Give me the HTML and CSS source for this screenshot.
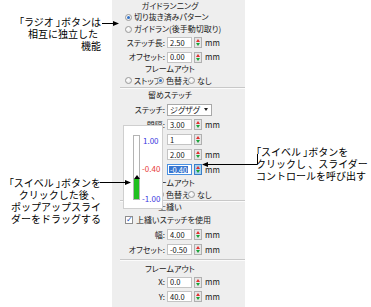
FILE: index.html
```html
<!DOCTYPE html>
<html lang="ja">
<head>
<meta charset="utf-8">
<link rel="stylesheet" href="styles.css">
</head>
<body>
<div class="stage">
  <div class="notes-left">
    <div class="note note-radio">
      <div class="ln"><span class="br">「</span>ラジオ <span class="br">」</span>ボタンは</div>
      <div class="ln ln-mid">相互に独立した</div>
      <div class="ln">機能</div>
    </div>
    <div class="note note-drag">
      <div class="ln"><span class="br">「</span>スイベル <span class="br">」</span>ボタンを</div>
      <div class="ln">クリックした後 、</div>
      <div class="ln">ポップアップスライ</div>
      <div class="ln">ダーをドラッグする</div>
    </div>
  </div>

  <div class="panel">
    <section class="grp grp-guide">
      <div class="title t-guide">ガイドランニング</div>
      <div class="opt"><span class="radio on"></span>切り抜き済みパターン</div>
      <div class="opt"><span class="radio"></span>ガイドラン(後手動切取り)</div>
      <div class="field f15"><span class="lbl">ステッチ長:</span><span class="num">2.50</span><span class="spin"><i class="up"></i><i class="dn"></i></span><span class="unit">mm</span></div>
      <div class="field f14"><span class="lbl">オフセット:</span><span class="num">0.00</span><span class="spin"><i class="up"></i><i class="dn"></i></span><span class="unit">mm</span></div>
      <div class="title t-frame">フレームアウト</div>
      <div class="opts">
        <span class="o o1"><span class="radio"></span>ストップ</span>
        <span class="o o2"><span class="radio on"></span>色替え</span>
        <span class="o o3"><span class="radio"></span>なし</span>
      </div>
    </section>
    <div class="sep"></div>
    <section class="grp grp-tie">
      <div class="title t-tie">留めステッチ</div>
      <div class="field f15"><span class="lbl">ステッチ:</span><span class="combo">ジグザグ<i class="caret"></i></span></div>
      <div class="field f15"><span class="lbl">間隔:</span><span class="num">3.00</span><span class="spin"><i class="up"></i><i class="dn"></i></span><span class="unit">mm</span></div>
      <div class="field f15"><span class="lbl"></span><span class="num">1</span><span class="spin"><i class="up"></i><i class="dn"></i></span></div>
      <div class="field f15"><span class="lbl"></span><span class="num">2.00</span><span class="spin"><i class="up"></i><i class="dn"></i></span><span class="unit">mm</span></div>
      <div class="field f15"><span class="lbl"></span><span class="num sel"><b>-0.40</b></span><span class="spin hot"><i class="up"></i><i class="dn"></i></span><span class="unit">mm</span></div>
      <div class="title t-frame2">フレームアウト</div>
      <div class="opts opts2">
        <span class="o o1"><span class="radio"></span>ストップ</span>
        <span class="o o2"><span class="radio on"></span>色替え</span>
        <span class="o o3"><span class="radio"></span>なし</span>
      </div>
    </section>
    <div class="sep"></div>
    <section class="grp grp-top">
      <div class="title t-top">上縫い</div>
      <div class="opt chk-row"><span class="check">✓</span>上縫いステッチを使用</div>
      <div class="field f15"><span class="lbl">幅:</span><span class="num">4.00</span><span class="spin"><i class="up"></i><i class="dn"></i></span><span class="unit">mm</span></div>
      <div class="field f15"><span class="lbl">オフセット:</span><span class="num">-0.50</span><span class="spin"><i class="up"></i><i class="dn"></i></span><span class="unit">mm</span></div>
    </section>
    <div class="sep"></div>
    <section class="grp grp-frame">
      <div class="title t-frame3">フレームアウト</div>
      <div class="field f14"><span class="lbl">X:</span><span class="num">0.0</span><span class="spin"><i class="up"></i><i class="dn"></i></span><span class="unit">mm</span></div>
      <div class="field f15"><span class="lbl">Y:</span><span class="num">40.0</span><span class="spin"><i class="up"></i><i class="dn"></i></span><span class="unit">mm</span></div>
    </section>
  </div>

  <div class="notes-right">
    <div class="note note-swivel">
      <div class="ln"><span class="br">「</span>スイベル <span class="br">」</span>ボタンを</div>
      <div class="ln">クリックし 、スライダー</div>
      <div class="ln">コントロールを呼び出す</div>
    </div>
  </div>

  <div class="popup">
    <div class="track"><div class="fill"></div></div>
    <div class="thumb"></div>
    <span class="pv pv-max">1.00</span>
    <span class="pv pv-cur">-0.40</span>
    <span class="pv pv-min">-1.00</span>
  </div>

  <svg class="leaders" width="371" height="307" viewBox="0 0 371 307">
    <g stroke="#000" stroke-width="1" fill="none">
      <line x1="102" y1="23.5" x2="115" y2="23.5"/>
      <line x1="100" y1="182.5" x2="127" y2="182.5"/>
      <polyline points="206,164.5 257.5,164.5 257.5,154"/>
    </g>
    <g fill="#000">
      <polygon points="119,23.5 113,21 113,26"/>
      <polygon points="131,182.5 125,180 125,185"/>
      <polygon points="202,164.5 208,162 208,167"/>
    </g>
  </svg>
</div>
</body>
</html>
```

FILE: styles.css
```css
html, body {
  margin: 0;
  padding: 0;
}
body {
  width: 371px;
  height: 307px;
  overflow: hidden;
  background: #ffffff;
  font-family: "Noto Sans CJK JP", "Noto Sans", sans-serif;
  color: #111;
}
.stage {
  position: relative;
  display: flex;
  height: 307px;
}

/* annotations */
.notes-left {
  width: 112px;
  box-sizing: border-box;
  padding: 16px 11px 0 0;
  display: flex;
  flex-direction: column;
  align-items: flex-end;
}
.note {
  font-size: 10px;
  line-height: 12px;
  color: #000;
  white-space: nowrap;
}
.note-radio,
.note-drag {
  text-align: right;
}
.note-drag {
  margin-top: 125px;
}
.ln-mid {
  padding-right: 3px;
}
.br {
  font-feature-settings: "palt";
}
.notes-right {
  flex: 1;
  box-sizing: border-box;
  padding: 146px 0 0 11px;
}

/* panel */
.panel {
  width: 133px;
  background: #eeeeee;
  display: flex;
  flex-direction: column;
  font-size: 8px;
  line-height: 1;
  font-feature-settings: "palt";
  color: #1a1a1a;
}
.grp {
  display: flex;
  flex-direction: column;
}
.grp-guide { padding-top: 1px; height: 86px; }
.grp-tie { height: 111px; }
.grp-top { height: 57px; }
.grp-frame { padding-top: 2px; }

.sep {
  margin-left: 8px;
  border-top: 1px solid #c8c8c8;
  border-bottom: 1px solid #fbfbfb;
}

.title {
  text-align: center;
  padding-right: 17px;
  display: flex;
  align-items: center;
  justify-content: center;
}
.t-guide { height: 10px; }
.t-frame { height: 10px; }
.t-tie { height: 11px; margin-bottom: 2px; }
.t-frame2 { height: 12px; }
.t-top { height: 10px; }
.t-frame3 { height: 12px; }

.opt {
  display: flex;
  align-items: center;
  height: 12px;
  padding-left: 13px;
  white-space: nowrap;
}
.chk-row {
  height: 15px;
}
.opts {
  display: flex;
  align-items: center;
  height: 13px;
  padding-left: 13px;
  white-space: nowrap;
}
.opts2 { height: 11px; }
.o {
  display: flex;
  align-items: center;
}
.o1 { width: 32px; }
.o2 { width: 31px; }

.radio {
  width: 7px;
  height: 7px;
  box-sizing: border-box;
  border-radius: 50%;
  border: 1px solid #9a9a9a;
  background: radial-gradient(circle at 40% 35%, #ffffff 0%, #e2e2e2 100%);
  margin-right: 2px;
  flex: none;
  position: relative;
}
.radio.on::after {
  content: "";
  position: absolute;
  left: 1px;
  top: 1px;
  width: 3px;
  height: 3px;
  border-radius: 50%;
  background: #2f6fc4;
}
.check {
  width: 8px;
  height: 8px;
  box-sizing: border-box;
  border: 1px solid #8e8e8e;
  background: #fff;
  color: #2250b8;
  font-size: 8px;
  line-height: 6px;
  text-align: center;
  margin-right: 3px;
  font-family: "DejaVu Sans", sans-serif;
  font-weight: bold;
}

.field {
  display: flex;
  align-items: center;
  white-space: nowrap;
}
.f15 { height: 15px; }
.f14 { height: 14px; }
.lbl {
  width: 55px;
  box-sizing: border-box;
  padding-right: 2px;
  text-align: right;
}
.num {
  width: 25px;
  height: 11px;
  box-sizing: border-box;
  background: #fff;
  border: 1px solid #c4c4c4;
  padding-left: 2px;
  display: flex;
  align-items: center;
  font-size: 7.5px;
  color: #111;
}
.num.sel {
  border-color: #4a90e0;
}
.num.sel b {
  font-weight: normal;
  background: #3876d0;
  color: #fff;
  padding: 0 1px;
  margin-left: -1px;
}
.spin {
  width: 8px;
  height: 11px;
  box-sizing: border-box;
  margin-left: 2px;
  border: 1px solid #b0b0b0;
  background: #e6e6e6;
  display: flex;
  flex-direction: column;
  align-items: center;
  justify-content: center;
  gap: 1px;
}
.spin.hot {
  background: #a9d3f0;
  border-color: #3c7fc8;
}
.spin .up {
  width: 0;
  height: 0;
  border-left: 2px solid transparent;
  border-right: 2px solid transparent;
  border-bottom: 3px solid #e03030;
}
.spin .dn {
  width: 0;
  height: 0;
  border-left: 2px solid transparent;
  border-right: 2px solid transparent;
  border-top: 3px solid #1aa33a;
}
.unit {
  margin-left: 3px;
}
.combo {
  width: 45px;
  height: 12px;
  box-sizing: border-box;
  background: #fff;
  border: 1px solid #a8a8a8;
  padding-left: 2px;
  display: flex;
  align-items: center;
  justify-content: space-between;
}
.caret {
  width: 0;
  height: 0;
  margin-right: 3px;
  border-left: 2px solid transparent;
  border-right: 2px solid transparent;
  border-top: 3px solid #222;
}

/* swivel popup slider (overlay) */
.popup {
  position: absolute;
  left: 123px;
  top: 125px;
  width: 40px;
  height: 84px;
  box-sizing: border-box;
  background: #fff;
  border: 1px solid #cfcfcf;
  font-size: 8px;
  line-height: 1;
}
.track {
  position: absolute;
  left: 9px;
  top: 9px;
  width: 7px;
  height: 65px;
  box-sizing: border-box;
  border: 1px solid #b4b4b4;
  background: #fff;
}
.fill {
  position: absolute;
  left: 0;
  right: 0;
  bottom: 0;
  height: 20px;
  background: #20c020;
}
.thumb {
  position: absolute;
  left: 10px;
  top: 49px;
  width: 0;
  height: 0;
  border-left: 3px solid transparent;
  border-right: 3px solid transparent;
  border-bottom: 4px solid #000;
}
.pv {
  position: absolute;
  left: 19px;
  white-space: nowrap;
}
.pv-max { top: 11px; color: #3a3ae0; }
.pv-cur { top: 39px; color: #e83a3a; left: 18px; }
.pv-min { top: 69px; color: #3a3ae0; left: 18px; }

.leaders {
  position: absolute;
  left: 0;
  top: 0;
  pointer-events: none;
}
```
